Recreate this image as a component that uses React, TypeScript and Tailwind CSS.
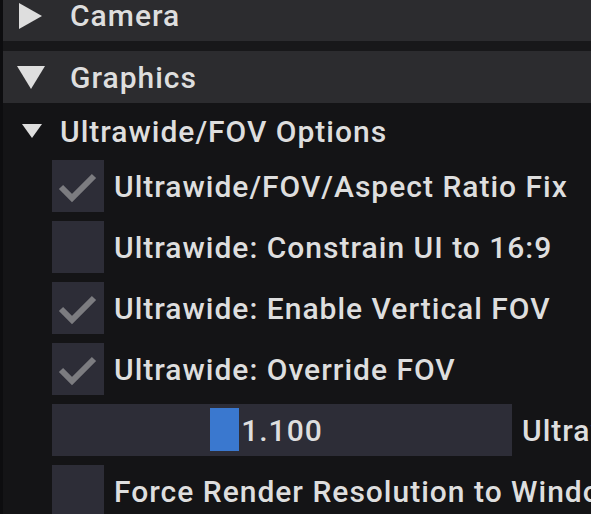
import { useState } from 'react'

type Opt = { id: string; label: string; checked: boolean }

const initial: Opt[] = [
  { id: 'fix', label: 'Ultrawide/FOV/Aspect Ratio Fix', checked: true },
  { id: 'ui', label: 'Ultrawide: Constrain UI to 16:9', checked: false },
  { id: 'vfov', label: 'Ultrawide: Enable Vertical FOV', checked: true },
  { id: 'fov', label: 'Ultrawide: Override FOV', checked: true },
]

function Checkbox({ opt, onToggle }: { opt: Opt; onToggle: () => void }) {
  return (
    <div className="flex items-center h-[52px] cursor-pointer" onClick={onToggle}>
      <div className="w-[52px] h-[52px] bg-[#2d2d37] shrink-0">
        {opt.checked && (
          <svg width="52" height="52" viewBox="0 0 52 52">
            <polyline points="9,27 20,38 42,16" fill="none" stroke="#7c7c80" strokeWidth="6" />
          </svg>
        )}
      </div>
      <span className="ml-[10px] whitespace-nowrap">{opt.label}</span>
    </div>
  )
}

export default function App() {
  const [opts, setOpts] = useState(initial)
  const [force, setForce] = useState(false)
  const fovValue = 1.1

  const toggle = (id: string) => {
    setOpts(opts.map((o) => (o.id === id ? { ...o, checked: !o.checked } : o)))
  }

  return (
    <div
      className="w-[591px] h-[514px] overflow-hidden bg-[#141416] border-l-[3px] border-[#0d0d0f] text-[#dedede] text-[30px] font-medium tracking-[1px]"
      style={{ fontFamily: 'Roboto, "Liberation Sans", sans-serif' }}
    >
      {/* collapsed header */}
      <div className="-mt-[10px] h-[51px] bg-[#2c2c2f] flex items-center whitespace-nowrap">
        <svg width="24" height="26" viewBox="0 0 24 26" className="ml-[16px]">
          <polygon points="0,0 23,13 0,26" fill="#dedede" />
        </svg>
        <span className="ml-[27px]">Camera</span>
      </div>
      <div className="h-[10px] bg-[#18181a]" />
      {/* open header */}
      <div className="h-[52px] bg-[#2c2c2f] flex items-center whitespace-nowrap">
        <svg width="28" height="23" viewBox="0 0 28 23" className="ml-[14px]">
          <polygon points="0,0 28,0 14,23" fill="#dedede" />
        </svg>
        <span className="ml-[25px]">Graphics</span>
      </div>

      <div className="pt-[7px]">
        {/* tree node */}
        <div className="h-[42px] flex items-center whitespace-nowrap">
          <svg width="20" height="14" viewBox="0 0 20 14" className="ml-[19px]">
            <polygon points="0,0 20,0 10,14" fill="#dedede" />
          </svg>
          <span className="ml-[18px]">Ultrawide/FOV Options</span>
        </div>

        <div className="mt-[8px] pl-[49px] flex flex-col gap-[9px]">
          {opts.map((o) => (
            <Checkbox key={o.id} opt={o} onToggle={() => toggle(o.id)} />
          ))}

          {/* slider */}
          <div className="flex items-center h-[52px] whitespace-nowrap">
            <div className="relative w-[460px] h-[52px] bg-[#2d2d37] shrink-0 flex items-center justify-center">
              <div className="absolute left-[158px] top-[4px] w-[29px] h-[43px] bg-[#3a78cf]" />
              <span className="relative">{fovValue.toFixed(3)}</span>
            </div>
            <span className="ml-[10px]">Ultrawide: FOV Multiplier</span>
          </div>

          <Checkbox
            opt={{ id: 'res', label: 'Force Render Resolution to Window', checked: force }}
            onToggle={() => setForce(!force)}
          />
        </div>
      </div>
    </div>
  )
}
